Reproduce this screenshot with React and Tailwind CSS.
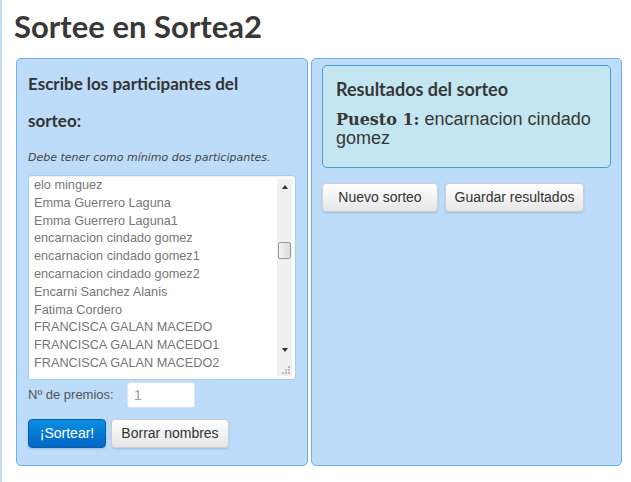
import React from 'react'

const names = [
  'elo minguez',
  'Emma Guerrero Laguna',
  'Emma Guerrero Laguna1',
  'encarnacion cindado gomez',
  'encarnacion cindado gomez1',
  'encarnacion cindado gomez2',
  'Encarni Sanchez Alanis',
  'Fatima Cordero',
  'FRANCISCA GALAN MACEDO',
  'FRANCISCA GALAN MACEDO1',
  'FRANCISCA GALAN MACEDO2',
]

const heading = { fontFamily: 'Lato, "DejaVu Sans", sans-serif' }
const arial = { fontFamily: '"Liberation Sans", Arial, sans-serif' }

function Btn({ children, primary, className = '' }) {
  return (
    <button
      className={
        'h-[29px] rounded-[4px] border text-[14px] shadow-[0_1px_2px_rgba(0,0,0,0.15)] ' +
        (primary
          ? 'border-[#0a5ba8] bg-gradient-to-b from-[#0a8ee3] to-[#0566c4] text-white '
          : 'border-[#cfcfcf] bg-gradient-to-b from-white to-[#e6e6e6] text-[#333] ') +
        className
      }
      style={arial}
    >
      {children}
    </button>
  )
}

function Scrollbar() {
  return (
    <div className="w-[15px] my-[3px] mr-[3px] bg-[#f0f0f0] flex flex-col items-center relative">
      <div className="h-[16px] flex items-center justify-center">
        <div className="w-0 h-0 border-x-[3px] border-x-transparent border-b-[4px] border-b-[#333]" />
      </div>
      <div className="mt-[47px] w-[13px] h-[17px] rounded-[2px] border border-[#999] bg-gradient-to-r from-[#f4f4f4] to-[#dcdcdc]" />
      <div className="flex-1" />
      <div className="h-[16px] flex items-center justify-center mb-[18px]">
        <div className="w-0 h-0 border-x-[3px] border-x-transparent border-t-[4px] border-t-[#333]" />
      </div>
      <div className="absolute bottom-[2px] right-[2px] grid grid-cols-3 gap-[1px]">
        <span />
        <span />
        <span className="w-[2px] h-[2px] bg-[#bbb]" />
        <span />
        <span className="w-[2px] h-[2px] bg-[#bbb]" />
        <span className="w-[2px] h-[2px] bg-[#bbb]" />
        <span className="w-[2px] h-[2px] bg-[#bbb]" />
        <span className="w-[2px] h-[2px] bg-[#bbb]" />
        <span className="w-[2px] h-[2px] bg-[#bbb]" />
      </div>
    </div>
  )
}

export default function App() {
  return (
    <div className="w-[631px] h-[482px] bg-white border-l-2 border-[#c6def4] overflow-hidden">
      <h1
        className="pl-[12px] pt-[6px] h-[58px] text-[31px] font-bold text-[#383838] leading-[40px]"
        style={heading}
      >
        Sortee en Sortea2
      </h1>

      <div className="flex gap-[3px] pl-[14px] h-[408px]">
        {/* Participantes */}
        <div className="w-[292px] rounded-[5px] border border-[#6eaee6] bg-[#bcdcf9] px-[11px]">
          <h3
            className="mt-[6px] text-[17px] font-bold text-[#333] leading-[37px]"
            style={heading}
          >
            Escribe los participantes del
            <br />
            sorteo:
          </h3>
          <p
            className="mt-[12px] text-[11px] italic text-[#444] leading-[14px]"
            style={{ fontFamily: '"DejaVu Sans", sans-serif' }}
          >
            Debe tener como mínimo dos participantes.
          </p>
          <div className="mt-[10px] flex h-[205px] w-[268px] rounded-[3px] border border-[#a9cdee] bg-white shadow-[inset_0_1px_2px_rgba(0,0,0,0.08)]">
            <div className="flex-1 pl-[5px] pt-[1px] overflow-hidden text-[12.7px] leading-[17.8px] text-[#777]" style={arial}>
              {names.map((n) => (
                <div key={n} className="whitespace-nowrap">{n}</div>
              ))}
            </div>
            <Scrollbar />
          </div>
          <div className="mt-[2px] flex items-center h-[26px]" style={arial}>
            <span className="w-[99px] text-[13px] text-[#555]">Nº de premios:</span>
            <div className="w-[68px] h-[26px] rounded-[3px] bg-white border border-[#d6e6f3] pl-[6px] flex items-center text-[14px] text-[#999]">
              1
            </div>
          </div>
          <div className="mt-[11px] flex gap-[5px]">
            <Btn primary className="w-[78px]">¡Sortear!</Btn>
            <Btn className="w-[118px]">Borrar nombres</Btn>
          </div>
        </div>

        {/* Resultados */}
        <div className="w-[311px] rounded-[5px] border border-[#6eaee6] bg-[#bcdcf9] px-[10px] pt-[6px]">
          <div className="h-[103px] rounded-[5px] border border-[#4a9ccb] bg-[#c3e6f1] px-[13px] pt-[12px] text-[#383838]">
            <h4 className="text-[18px] font-bold leading-[22px]" style={heading}>
              Resultados del sorteo
            </h4>
            <p className="mt-[10px] text-[18px] leading-[19px]" style={arial}>
              <span className="font-bold text-[16px]" style={{ fontFamily: '"DejaVu Serif", serif' }}>Puesto 1:</span>{' '}
              encarnacion cindado gomez
            </p>
          </div>
          <div className="mt-[15px] flex gap-[7px]">
            <Btn className="w-[116px]">Nuevo sorteo</Btn>
            <Btn className="w-[139px] text-[13px]">Guardar resultados</Btn>
          </div>
        </div>
      </div>
    </div>
  )
}
